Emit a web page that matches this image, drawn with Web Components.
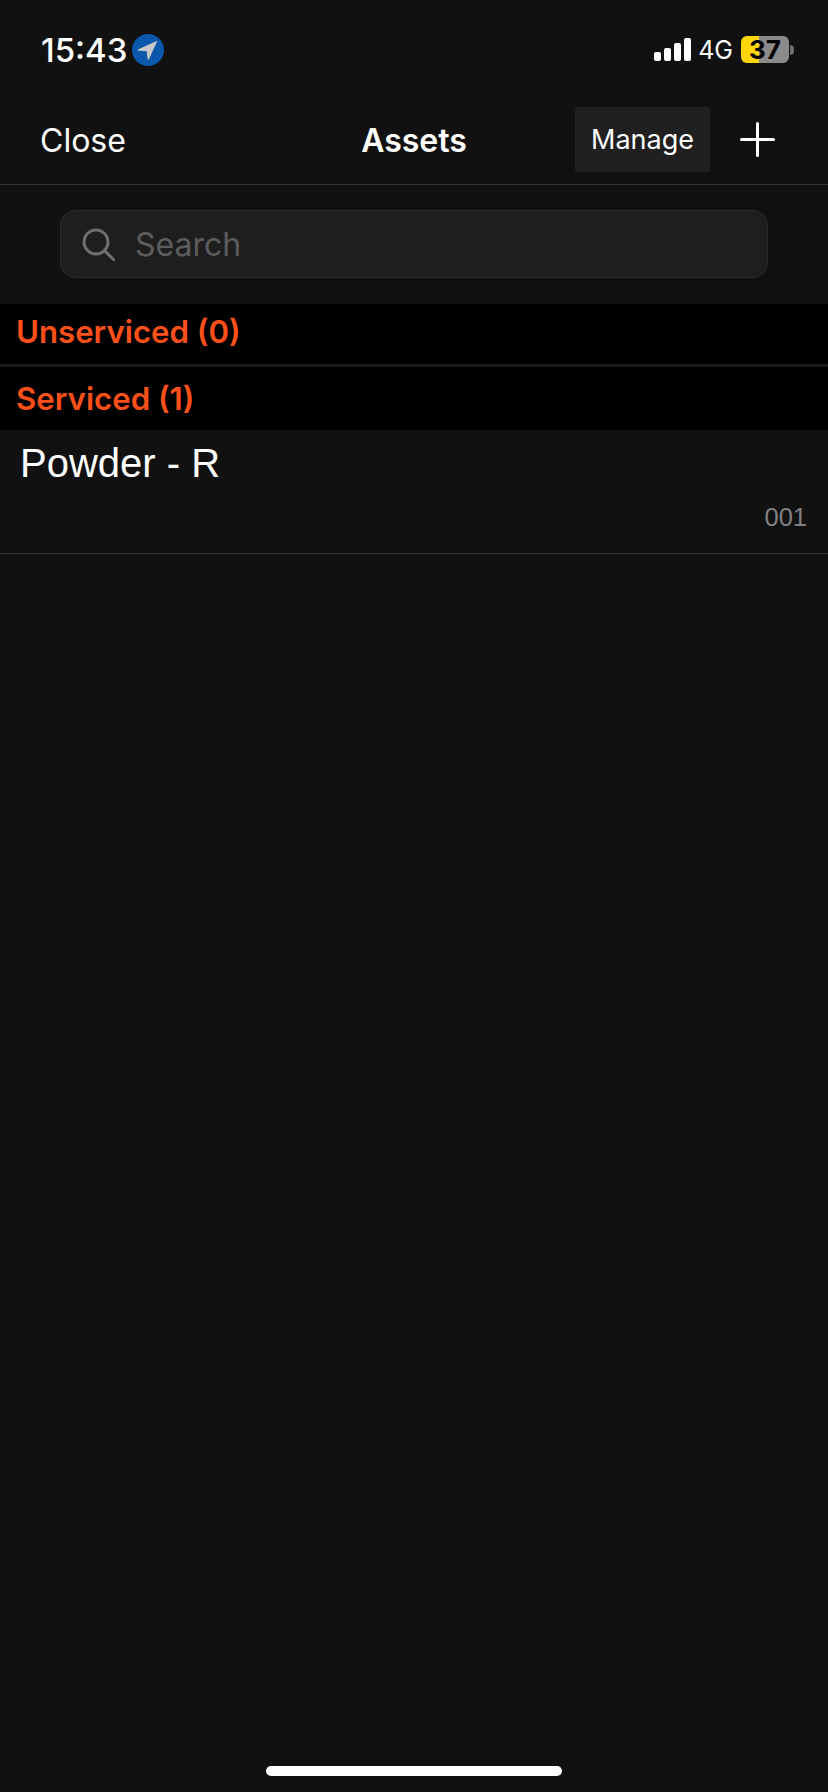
<!DOCTYPE html>
<html>
<head>
<meta charset="utf-8">
<title>Assets</title>
<style>
  html, body { margin: 0; background: #111111; }
  body { font-family: Inter, "Liberation Sans", sans-serif; color: #fff; }
  #app { display: flex; flex-direction: column; min-height: 1792px; }
</style>
</head>
<body>
<div id="app">
  <status-bar time="15:43" network="4G" battery="37"></status-bar>
  <nav-bar heading="Assets"></nav-bar>
  <search-box placeholder="Search"></search-box>
  <section-header>Unserviced (0)</section-header>
  <section-header divided>Serviced (1)</section-header>
  <asset-row name="Powder - R" code="001"></asset-row>
  <home-indicator></home-indicator>
</div>

<script>
class StatusBar extends HTMLElement {
  constructor() {
    super();
    this.attachShadow({ mode: "open" });
    this.shadowRoot.innerHTML = `
      <style>
        :host { display: flex; align-items: center; justify-content: space-between; height: 88px; padding: 11px 34px 0 41px; box-sizing: border-box; color: #fff; font-family: Inter, sans-serif; }
        .left, .right { display: flex; align-items: center; }
        .time { font-size: 33px; font-weight: 500; line-height: 40px; margin-right: 5px; }
        .bars { display: block; margin-right: 7px; }
        .net { font-size: 25px; font-weight: 400; line-height: 30px; margin-right: 8px; }
        .battery { width: 48px; height: 27px; border-radius: 6px; background: linear-gradient(90deg, #ffd60a 37.5%, #8a8a8a 37.5%); color: #000; font-size: 26px; font-weight: 700; line-height: 27px; text-align: center; }
        .nub { width: 4px; height: 10px; margin-left: 1px; background: #6e6e6e; border-radius: 0 5px 5px 0; }
      </style>
      <div class="left">
        <span class="time"></span>
        <svg width="32" height="32" viewBox="0 0 32 32">
          <circle cx="16" cy="16" r="16" fill="#0c58ad"/>
          <path d="M6 16 L24.5 7.5 L16.3 25.5 L15 16.8 Z" fill="#c9c9c9" stroke="#c9c9c9" stroke-width="1" stroke-linejoin="round"/>
        </svg>
      </div>
      <div class="right">
        <svg class="bars" width="37" height="23" viewBox="0 0 37 23" fill="#fff">
          <rect x="0" y="14" width="7" height="9" rx="2"/>
          <rect x="10" y="10" width="7" height="13" rx="2"/>
          <rect x="20" y="5" width="7" height="18" rx="2"/>
          <rect x="30" y="0" width="7" height="23" rx="2"/>
        </svg>
        <span class="net"></span>
        <span class="battery"></span>
        <span class="nub"></span>
      </div>`;
    this.shadowRoot.querySelector(".time").textContent = this.getAttribute("time");
    this.shadowRoot.querySelector(".net").textContent = this.getAttribute("network");
    this.shadowRoot.querySelector(".battery").textContent = this.getAttribute("battery");
  }
}

class NavBar extends HTMLElement {
  constructor() {
    super();
    this.attachShadow({ mode: "open" });
    this.shadowRoot.innerHTML = `
      <style>
        :host { display: grid; grid-template-columns: 1fr auto 1fr; align-items: center; padding: 19px 40px 12px 40px; border-bottom: 1px solid #333333; color: #fff; font-family: Inter, sans-serif; font-size: 32px; }
        .close, .title { padding-top: 2px; }
        .title { font-size: 32px; font-weight: 600; }
        .actions { display: flex; align-items: center; justify-content: flex-end; gap: 30px; margin-right: 13px; }
        .manage { display: flex; align-items: center; height: 65px; padding: 0 16px; border-radius: 3px; background: #202020; font-size: 27px; }
        svg { display: block; }
      </style>
      <span class="close">Close</span>
      <span class="title"></span>
      <div class="actions">
        <span class="manage">Manage</span>
        <svg width="35" height="35" viewBox="0 0 35 35" stroke="#fff" stroke-width="3" stroke-linecap="round">
          <path d="M17.5 1.5V33.5M1.5 17.5H33.5"/>
        </svg>
      </div>`;
    this.shadowRoot.querySelector(".title").textContent = this.getAttribute("heading");
  }
}

class SearchBox extends HTMLElement {
  constructor() {
    super();
    this.attachShadow({ mode: "open" });
    this.shadowRoot.innerHTML = `
      <style>
        :host { display: block; padding: 25px 60px 26px; font-family: Inter, sans-serif; }
        .field { display: flex; align-items: center; gap: 20px; height: 68px; box-sizing: border-box; padding-left: 21px; background: #1e1e1e; border: 1px solid #2a2a2a; border-radius: 15px; color: #5c5c5c; font-size: 32px; }
        svg { display: block; flex: none; }
      </style>
      <div class="field">
        <svg width="33" height="33" viewBox="0 0 33 33" fill="none" stroke="#6f6f6f" stroke-width="3" stroke-linecap="round">
          <circle cx="14" cy="14" r="12"/>
          <path d="M23 23L32 32"/>
        </svg>
        <span class="text"></span>
      </div>`;
    this.shadowRoot.querySelector(".text").textContent = this.getAttribute("placeholder");
  }
}

class SectionHeader extends HTMLElement {
  constructor() {
    super();
    this.attachShadow({ mode: "open" });
    this.shadowRoot.innerHTML = `
      <style>
        :host { display: block; background: #000; color: #ff5019; font-family: Inter, sans-serif; font-size: 31.2px; font-weight: 600; }
        :host([divided]) { border-top: 3px solid #1c1c1c; }
        .inner { display: flex; align-items: center; height: 60px; box-sizing: border-box; padding: 0 0 5px 16px; }
        :host([divided]) .inner { height: 63px; padding-bottom: 0; }
      </style>
      <div class="inner"><slot></slot></div>`;
  }
}

class AssetRow extends HTMLElement {
  constructor() {
    super();
    this.attachShadow({ mode: "open" });
    this.shadowRoot.innerHTML = `
      <style>
        :host { display: block; height: 124px; box-sizing: border-box; padding: 8px 21px 0 20px; border-bottom: 1px solid #333333; font-family: "Liberation Sans", sans-serif; }
        .name { color: #fff; font-size: 40px; line-height: 50px; }
        .code { margin-top: 13px; color: #808080; font-size: 25.5px; line-height: 32px; text-align: right; }
      </style>
      <div class="name"></div>
      <div class="code"></div>`;
    this.shadowRoot.querySelector(".name").textContent = this.getAttribute("name");
    this.shadowRoot.querySelector(".code").textContent = this.getAttribute("code");
  }
}

class HomeIndicator extends HTMLElement {
  constructor() {
    super();
    this.attachShadow({ mode: "open" });
    this.shadowRoot.innerHTML = `
      <style>
        :host { display: flex; justify-content: center; margin-top: auto; padding-bottom: 16px; }
        .pill { width: 296px; height: 10px; border-radius: 5px; background: #fff; }
      </style>
      <div class="pill"></div>`;
  }
}

customElements.define("status-bar", StatusBar);
customElements.define("nav-bar", NavBar);
customElements.define("search-box", SearchBox);
customElements.define("section-header", SectionHeader);
customElements.define("asset-row", AssetRow);
customElements.define("home-indicator", HomeIndicator);
</script>
</body>
</html>
